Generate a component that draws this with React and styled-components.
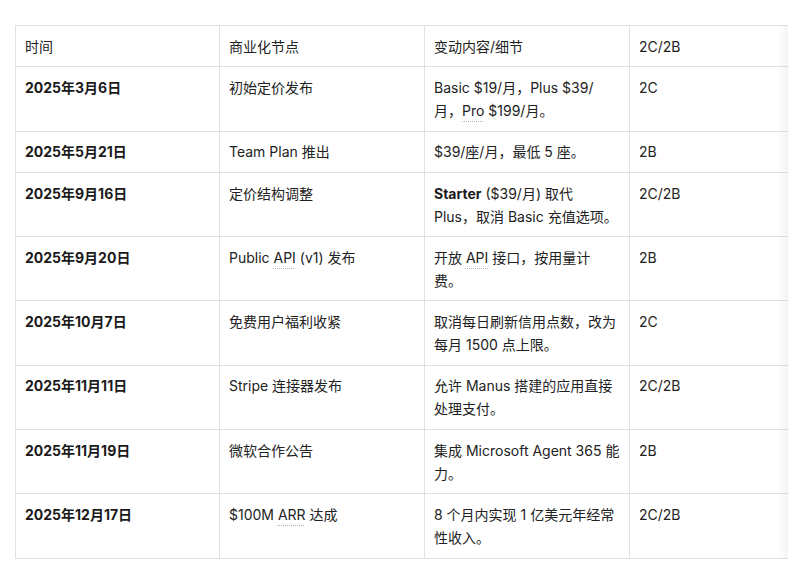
import React from "react";
import styled, { createGlobalStyle } from "styled-components";

const Global = createGlobalStyle`
  html, body { margin: 0; padding: 0; background: #ffffff; }
  body {
    font-family: Inter, "Liberation Sans", "Noto Sans CJK SC", sans-serif;
    color: #222222;
    -webkit-font-smoothing: antialiased;
  }
`;

const Page = styled.div`
  width: 800px;
  height: 585px;
  padding: 25px 0 0 15px;
  box-sizing: border-box;
`;

const Scroller = styled.div`
  position: relative;
  width: 773px;
  overflow: hidden;
  &::after {
    content: "";
    position: absolute;
    top: 0;
    right: 0;
    bottom: 0;
    width: 10px;
    background: linear-gradient(to right, rgba(0, 0, 0, 0), rgba(0, 0, 0, 0.045));
    pointer-events: none;
  }
`;

const Table = styled.table`
  border-collapse: collapse;
  table-layout: fixed;
  width: 820px;
  font-size: 14px;
  line-height: 23px;
`;

const Cell = styled.td`
  border: 1px solid #e1e1e1;
  padding: 8.7px 9px 8.6px 9px;
  vertical-align: top;
  text-align: left;
  font-weight: ${(p) => (p.$bold ? 700 : 400)};
  color: ${(p) => (p.$bold ? "#1a1a1a" : "#222222")};
`;

const HeadCell = styled(Cell).attrs({ as: "th" })`
  font-weight: 400;
  color: #222222;
`;

const Line = styled.span`
  display: block;
  white-space: nowrap;
`;

const Abbr = styled.span`
  text-decoration: underline dotted #b0b0b0;
  text-decoration-thickness: 1px;
  text-underline-offset: 5px;
`;

const Strong = styled.strong`
  font-weight: 700;
  color: #1a1a1a;
`;

const rows = [
  {
    date: "2025年3月6日",
    node: "初始定价发布",
    detail: [
      "Basic $19/月，Plus $39/",
      <>月，<Abbr>Pro</Abbr> $199/月。</>,
    ],
    type: "2C",
  },
  {
    date: "2025年5月21日",
    node: "Team Plan 推出",
    detail: ["$39/座/月，最低 5 座。"],
    type: "2B",
  },
  {
    date: "2025年9月16日",
    node: "定价结构调整",
    detail: [
      <><Strong>Starter</Strong> ($39/月) 取代</>,
      "Plus，取消 Basic 充值选项。",
    ],
    type: "2C/2B",
  },
  {
    date: "2025年9月20日",
    node: <>Public <Abbr>API</Abbr> (v1) 发布</>,
    detail: [<>开放 <Abbr>API</Abbr> 接口，按用量计</>, "费。"],
    type: "2B",
  },
  {
    date: "2025年10月7日",
    node: "免费用户福利收紧",
    detail: ["取消每日刷新信用点数，改为", "每月 1500 点上限。"],
    type: "2C",
  },
  {
    date: "2025年11月11日",
    node: "Stripe 连接器发布",
    detail: ["允许 Manus 搭建的应用直接", "处理支付。"],
    type: "2C/2B",
  },
  {
    date: "2025年11月19日",
    node: "微软合作公告",
    detail: ["集成 Microsoft Agent 365 能", "力。"],
    type: "2B",
  },
  {
    date: "2025年12月17日",
    node: <>$100M <Abbr>ARR</Abbr> 达成</>,
    detail: ["8 个月内实现 1 亿美元年经常", "性收入。"],
    type: "2C/2B",
  },
];

export default function App() {
  return (
    <>
      <Global />
      <Page>
        <Scroller>
          <Table>
            <colgroup>
              <col style={{ width: 204 }} />
              <col style={{ width: 205 }} />
              <col style={{ width: 205 }} />
              <col style={{ width: 205 }} />
            </colgroup>
            <thead>
              <tr>
                <HeadCell>时间</HeadCell>
                <HeadCell>商业化节点</HeadCell>
                <HeadCell>变动内容/细节</HeadCell>
                <HeadCell>2C/2B</HeadCell>
              </tr>
            </thead>
            <tbody>
              {rows.map((r, i) => (
                <tr key={i}>
                  <Cell $bold>{r.date}</Cell>
                  <Cell>{r.node}</Cell>
                  <Cell>
                    {r.detail.map((l, j) => (
                      <Line key={j}>{l}</Line>
                    ))}
                  </Cell>
                  <Cell>{r.type}</Cell>
                </tr>
              ))}
            </tbody>
          </Table>
        </Scroller>
      </Page>
    </>
  );
}
